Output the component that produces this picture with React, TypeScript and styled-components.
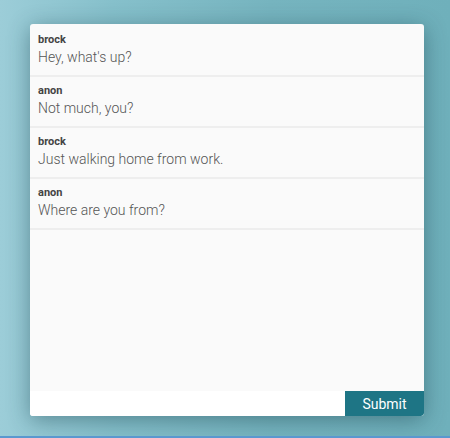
import React from "react";
import styled, { createGlobalStyle } from "styled-components";

const Global = createGlobalStyle`
  html, body { margin: 0; padding: 0; }
  body { font-family: Roboto, "Noto Sans", sans-serif; }
`;

const Page = styled.div`
  width: 450px;
  height: 438px;
  box-sizing: border-box;
  background: linear-gradient(to right, #9ccdd8 0%, #86c0cb 25%, #76b4bf 60%, #6fb0bb 100%);
  border-bottom: 2px solid #5a98cf;
  padding: 24px 26px 0 30px;
  overflow: hidden;
`;

const Card = styled.div`
  width: 394px;
  height: 392px;
  background: #fafafa;
  border-radius: 3px;
  box-shadow: 0 4px 22px rgba(20, 60, 70, 0.45);
  display: flex;
  flex-direction: column;
  overflow: hidden;
`;

const List = styled.div`
  flex: 1;
  display: flex;
  flex-direction: column;
  padding-top: 2px;
`;

const Row = styled.div`
  height: 51px;
  box-sizing: border-box;
  padding: 7px 8px 0 8px;
  border-bottom: 2px solid #eeeeee;
  display: flex;
  flex-direction: column;
`;

const Name = styled.div`
  font-size: 11px;
  font-weight: 700;
  color: #444;
  line-height: 13px;
`;

const Message = styled.div`
  font-size: 14px;
  font-weight: 300;
  color: #555;
  line-height: 20px;
  margin-top: 1px;
`;

const Form = styled.div`
  height: 25px;
  display: flex;
`;

const Input = styled.input`
  flex: 1;
  border: none;
  outline: none;
  background: #fff;
  margin: 0;
  padding: 0 8px;
  font-family: Roboto, sans-serif;
`;

const Button = styled.button`
  width: 79px;
  border: none;
  margin: 0;
  background: #1e7585;
  color: #fff;
  font-family: Roboto, sans-serif;
  font-size: 14px;
  font-weight: 400;
  padding: 0;
  border-bottom-right-radius: 3px;
`;

const messages = [
  { name: "brock", text: "Hey, what's up?" },
  { name: "anon", text: "Not much, you?" },
  { name: "brock", text: "Just walking home from work." },
  { name: "anon", text: "Where are you from?" },
];

export default function App() {
  return (
    <>
      <Global />
      <Page>
        <Card>
          <List>
            {messages.map((m, i) => (
              <Row key={i}>
                <Name>{m.name}</Name>
                <Message>{m.text}</Message>
              </Row>
            ))}
          </List>
          <Form>
            <Input />
            <Button>Submit</Button>
          </Form>
        </Card>
      </Page>
    </>
  );
}
